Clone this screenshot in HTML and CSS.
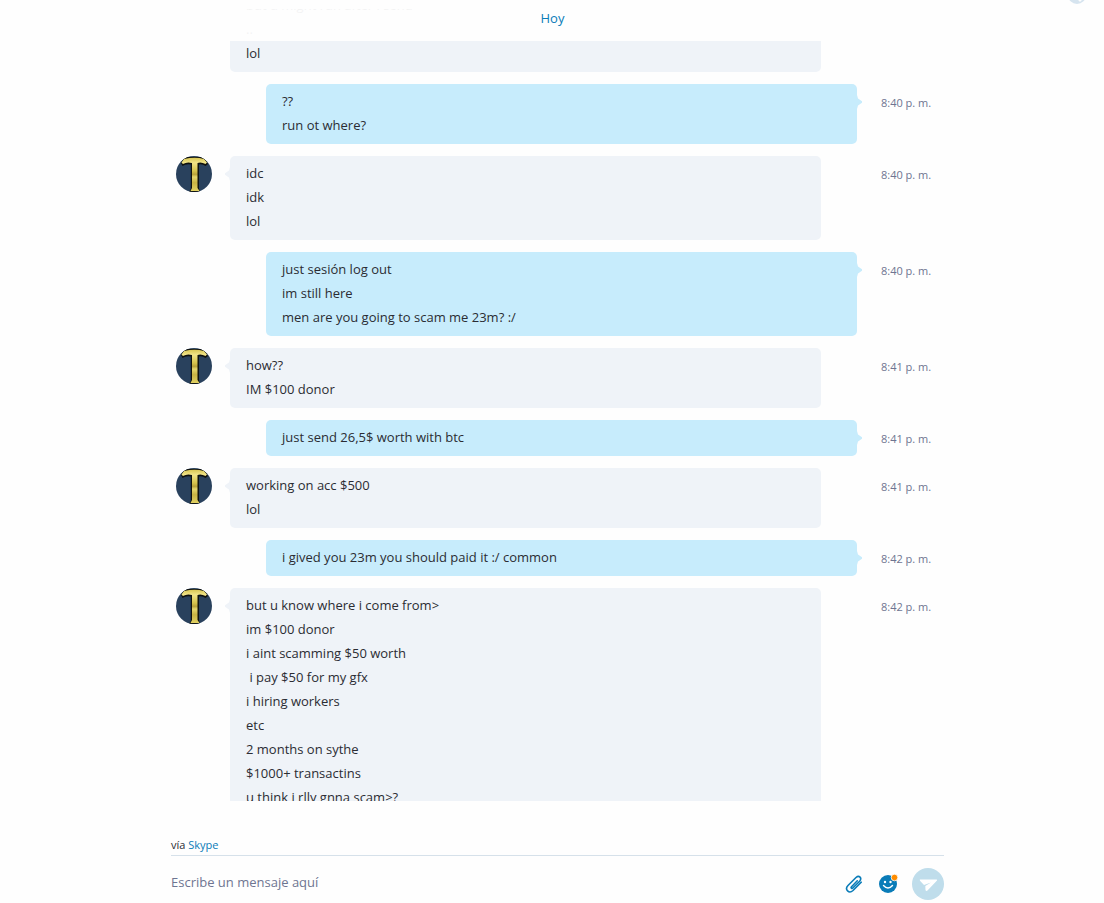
FILE: index.html
```
<!DOCTYPE html>
<html lang="es">
  <head>
    <meta charset="UTF-8" />
    <meta name="viewport" content="width=device-width, initial-scale=1.0" />
    <title>Skype</title>
    <link rel="stylesheet" href="styles.css">
  </head>

  <body>
    <svg class="sprite" aria-hidden="true">
      <defs>
        <linearGradient id="gold" x1="0" y1="0" x2="0" y2="1">
          <stop offset="0" stop-color="#d8c653" />
          <stop offset="0.15" stop-color="#f1e488" />
          <stop offset="0.4" stop-color="#d5c24c" />
          <stop offset="0.5" stop-color="#b8a23a" />
          <stop offset="0.58" stop-color="#e6d76c" />
          <stop offset="0.75" stop-color="#c8b344" />
          <stop offset="1" stop-color="#e2d263" />
        </linearGradient>
        <clipPath id="round"><circle cx="18" cy="18" r="18" /></clipPath>
      </defs>
      <symbol id="avatar" viewBox="0 0 36 36">
        <g clip-path="url(#round)">
          <rect width="36" height="36" fill="#29415d" />
          <path d="M5 7 L8 1 H28 L32 8 L29.500 10 Q26 7.500 23 8.500 V33 L24.500 36 H13 L14.800 33 V8.500 Q10 7.500 6.500 10 Z" fill="#10120f" />
          <path d="M5.500 6.500 L8 3 Q19 0.500 28 3 L31 6.500 L29.500 8 Q25 5.500 21.500 7 V32 L23.500 35 H14.500 L16 32 V7 Q11 5.500 7 8 Z" fill="url(#gold)" />
        </g>
      </symbol>
    </svg>

    <button class="notice" aria-label="Avisos"></button>

    <main class="chat">
      <section class="history">
        <h2 class="day">Hoy</h2>
        <div class="messages">
          <div class="row received first">
            <div class="bubble">
              <p>but u might run after i send</p>
              <p>..</p>
              <p>lol</p>
            </div>
            <time></time>
          </div>
          <div class="row sent">
            <div class="bubble tail">
              <p>??</p>
              <p>run ot where?</p>
            </div>
            <time>8:40 p. m.</time>
          </div>
          <div class="row received">
            <svg class="avatar"><use href="#avatar" /></svg>
            <div class="bubble tail">
              <p>idc</p>
              <p>idk</p>
              <p>lol</p>
            </div>
            <time>8:40 p. m.</time>
          </div>
          <div class="row sent">
            <div class="bubble tail">
              <p>just sesión log out</p>
              <p>im still here</p>
              <p>men are you going to scam me 23m? :/</p>
            </div>
            <time>8:40 p. m.</time>
          </div>
          <div class="row received">
            <svg class="avatar"><use href="#avatar" /></svg>
            <div class="bubble tail">
              <p>how??</p>
              <p>IM $100 donor</p>
            </div>
            <time>8:41 p. m.</time>
          </div>
          <div class="row sent">
            <div class="bubble tail">
              <p>just send 26,5$ worth with btc</p>
            </div>
            <time>8:41 p. m.</time>
          </div>
          <div class="row received">
            <svg class="avatar"><use href="#avatar" /></svg>
            <div class="bubble tail">
              <p>working on acc $500</p>
              <p>lol</p>
            </div>
            <time>8:41 p. m.</time>
          </div>
          <div class="row sent">
            <div class="bubble tail">
              <p>i gived you 23m you should paid it :/ common</p>
            </div>
            <time>8:42 p. m.</time>
          </div>
          <div class="row received">
            <svg class="avatar"><use href="#avatar" /></svg>
            <div class="bubble tail">
              <p>but u know where i come from&gt;</p>
              <p>im $100 donor</p>
              <p>i aint scamming $50 worth</p>
              <p> i pay $50 for my gfx</p>
              <p>i hiring workers</p>
              <p>etc</p>
              <p>2 months on sythe</p>
              <p>$1000+ transactins</p>
              <p>u think i rlly gnna scam&gt;?</p>
            </div>
            <time>8:42 p. m.</time>
          </div>
        </div>
      </section>

      <form class="composer">
        <div class="via">vía <a href="#">Skype</a></div>
        <div class="entry">
          <input type="text" aria-label="Mensaje" placeholder="Escribe un mensaje aquí" />
          <button type="button" class="tool" aria-label="Adjuntar archivo">
            <svg width="20" height="20" viewBox="0 0 20 20" fill="none" stroke="#0a7cb8" stroke-width="1.600" stroke-linecap="round" stroke-linejoin="round">
              <path d="M13.300 6.800 L7.500 12.700 C6.500 13.800 7.800 15 8.800 14 L15.600 7.200 C18.300 4.200 15.200 0.600 12 3.500 L4 11.500 C0.300 15.400 5 20.300 9 16.500 L17.200 8.200" />
            </svg>
          </button>
          <button type="button" class="tool" aria-label="Emoticonos">
            <svg width="20" height="20" viewBox="0 0 20 20">
              <circle cx="10" cy="10" r="9" fill="#0a7cb8" />
              <circle cx="7" cy="8" r="1.200" fill="#fff" />
              <circle cx="12.500" cy="8" r="1.200" fill="#fff" />
              <path d="M5.500 11.500 Q10 16.500 14.500 11.500" fill="none" stroke="#fff" stroke-width="1.400" stroke-linecap="round" />
              <circle cx="16.500" cy="3.500" r="3.300" fill="#ff8c00" stroke="#fff" stroke-width="0.800" />
            </svg>
          </button>
          <button type="submit" class="send" aria-label="Enviar">
            <svg width="32" height="32" viewBox="0 0 32 32">
              <path d="M8 11.500 H24.500 Q25.500 11.500 25 12.500 L15.500 22.500 Q14 23.500 13.500 22 L13.300 18 L19 14.600 L12 17 L8 12.800 Q7.500 11.600 8 11.500 Z" fill="#fff" />
            </svg>
          </button>
        </div>
      </form>
    </main>
  </body>
</html>
```
FILE: styles.css
```
* {
  box-sizing: border-box;
}

body {
  height: 100vh;
  margin: 0;
  background-color: #fefefe;
  color: #2b2c33;
  font-family: "Open Sans", "Noto Sans", sans-serif;
  font-size: 13px;
  overflow: hidden;
}

p,
h2 {
  margin: 0;
}

a {
  color: #0a7cb8;
  text-decoration: none;
}

button {
  padding: 0;
  border: none;
  background: none;
  cursor: pointer;
}

.sprite {
  position: absolute;
  width: 0;
  height: 0;
}

/* sits half out of the window */
.notice {
  position: absolute;
  top: -14px;
  right: 18px;
  width: 18px;
  height: 18px;
  border-radius: 50%;
  background: radial-gradient(circle at 12px 14px, #fefefe 1px, #d6e4ef 2px);
}

.chat {
  display: flex;
  flex-direction: column;
  height: 100%;
  padding: 9px 160px 0 171px;
}

/* history */

.history {
  position: relative;
  flex: 1;
  min-height: 0;
  overflow: hidden;
}

.day {
  position: absolute;
  top: 0;
  left: 0;
  right: 0;
  z-index: 9;
  height: 32px;
  padding-right: 10px;
  background-color: rgba(254, 254, 254, 0.95);
  color: #0a7cb8;
  font-size: 13px;
  font-weight: 400;
  line-height: 18px;
  text-align: center;
}

.messages {
  display: flex;
  flex-direction: column;
  gap: 12px;
  margin-top: -21px;
}

.row {
  display: flex;
  align-items: flex-start;
}

.received {
  padding-left: 5px;
}

.received.first {
  padding-left: 59px;
}

.sent {
  padding-left: 95px;
}

.avatar {
  flex: none;
  width: 36px;
  height: 36px;
  margin-right: 18px;
}

.bubble {
  position: relative;
  flex: 1;
  padding: 5px 16px 7px;
  border-radius: 5px;
  line-height: 24px;
}

.bubble p {
  white-space: pre;
}

.received .bubble {
  margin-right: 60px;
  background-color: #eff3f8;
}

.sent .bubble {
  margin-right: 24px;
  background-color: #c7ecfc;
}

.tail::before {
  content: "";
  position: absolute;
  top: 11px;
  width: 5px;
  height: 14px;
}

.received .tail::before {
  right: 100%;
  background-color: #eff3f8;
  clip-path: polygon(100% 0, 80% 25%, 0 45%, 0 55%, 80% 75%, 100% 100%);
}

.sent .tail::before {
  left: 100%;
  background-color: #c7ecfc;
  clip-path: polygon(0 0, 20% 25%, 100% 45%, 100% 55%, 20% 75%, 0 100%);
}

time {
  flex: none;
  width: 63px;
  padding-top: 7px;
  color: #6e7591;
  font-size: 11px;
  line-height: 24px;
}

/* composer */

.composer {
  flex: none;
  padding-top: 36px;
}

.via {
  padding-bottom: 2px;
  border-bottom: 1px solid #d6e1ea;
  font-size: 11px;
  line-height: 16px;
}

.entry {
  display: flex;
  align-items: center;
  padding: 12px 0 3px;
}

.entry input {
  flex: 1;
  min-width: 0;
  height: 32px;
  padding: 0 0 4px;
  border: none;
  outline: none;
  background: none;
  color: inherit;
  font: inherit;
}

.entry input::placeholder {
  color: #6e7591;
}

.tool {
  width: 20px;
  height: 20px;
  margin-right: 14px;
}

.tool svg,
.send svg {
  display: block;
}

.send {
  width: 32px;
  height: 32px;
  border-radius: 50%;
  background-color: #bfddeb;
}
```
